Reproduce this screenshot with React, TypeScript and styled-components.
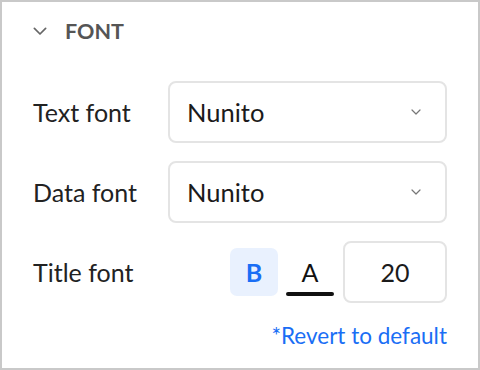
import React from "react";
import styled, { createGlobalStyle } from "styled-components";

const Global = createGlobalStyle`
  html, body { margin: 0; padding: 0; background: #fff; }
  * { box-sizing: border-box; }
`;

const Panel = styled.div`
  width: 480px;
  height: 370px;
  border: 2px solid #c9c9c9;
  background: #fff;
  padding: 0 31px;
  font-family: Lato, "Noto Sans", sans-serif;
  color: #222;
`;

const Header = styled.div`
  height: 58px;
  display: flex;
  align-items: center;
  gap: 18px;
`;

const HeaderTitle = styled.span`
  font-size: 21.5px;
  font-weight: 700;
  color: #555;
`;

const Body = styled.div`
  margin-top: 21px;
  display: flex;
  flex-direction: column;
  gap: 18px;
`;

const Row = styled.div`
  display: flex;
  align-items: center;
  height: 62px;
`;

const Label = styled.div`
  width: 135px;
  font-size: 25px;
  color: #222;
`;

const Select = styled.div`
  flex: 1;
  height: 62px;
  border: 2px solid #e4e4e4;
  border-radius: 8px;
  display: flex;
  align-items: center;
  justify-content: space-between;
  padding: 0 24px 0 17px;
  font-size: 25.5px;
  color: #1b1b1b;
`;

const Controls = styled.div`
  flex: 1;
  display: flex;
  justify-content: flex-end;
  align-items: center;
  gap: 8px;
`;

const StyleButton = styled.div<{ $active?: boolean }>`
  width: 48px;
  height: 48px;
  border-radius: 7px;
  display: flex;
  align-items: center;
  justify-content: center;
  position: relative;
  background: ${(p) => (p.$active ? "#e9f1fe" : "transparent")};
  color: ${(p) => (p.$active ? "#1a6ef5" : "#111")};
  font-size: 25px;
  font-weight: ${(p) => (p.$active ? 700 : 400)};
`;

const ColorBar = styled.span`
  position: absolute;
  left: 0;
  right: 0;
  bottom: 0;
  height: 4px;
  border-radius: 2px;
  background: #111;
`;

const NumberBox = styled.div`
  width: 104px;
  height: 62px;
  margin-left: 1px;
  border: 2px solid #e4e4e4;
  border-radius: 8px;
  display: flex;
  align-items: center;
  justify-content: center;
  font-size: 25px;
  color: #1b1b1b;
`;

const Footer = styled.div`
  display: flex;
  justify-content: flex-end;
  margin-top: 19px;
`;

const Revert = styled.span`
  color: #1a6ef5;
  font-size: 22.5px;
`;

const Chevron = ({ size, color }: { size: number; color: string }) => (
  <svg width={size} height={size * 0.6} viewBox="0 0 10 6" fill="none">
    <path d="M1 1l4 4 4-4" stroke={color} strokeWidth={1.2} strokeLinecap="round" strokeLinejoin="round" />
  </svg>
);

export default function App() {
  return (
    <>
      <Global />
      <Panel>
        <Header>
          <Chevron size={14} color="#666" />
          <HeaderTitle>FONT</HeaderTitle>
        </Header>
        <Body>
          <Row>
            <Label>Text font</Label>
            <Select>
              Nunito
              <Chevron size={10} color="#777" />
            </Select>
          </Row>
          <Row>
            <Label>Data font</Label>
            <Select>
              Nunito
              <Chevron size={10} color="#777" />
            </Select>
          </Row>
          <Row>
            <Label>Title font</Label>
            <Controls>
              <StyleButton $active>B</StyleButton>
              <StyleButton>
                A
                <ColorBar />
              </StyleButton>
              <NumberBox>20</NumberBox>
            </Controls>
          </Row>
        </Body>
        <Footer>
          <Revert>*Revert to default</Revert>
        </Footer>
      </Panel>
    </>
  );
}
